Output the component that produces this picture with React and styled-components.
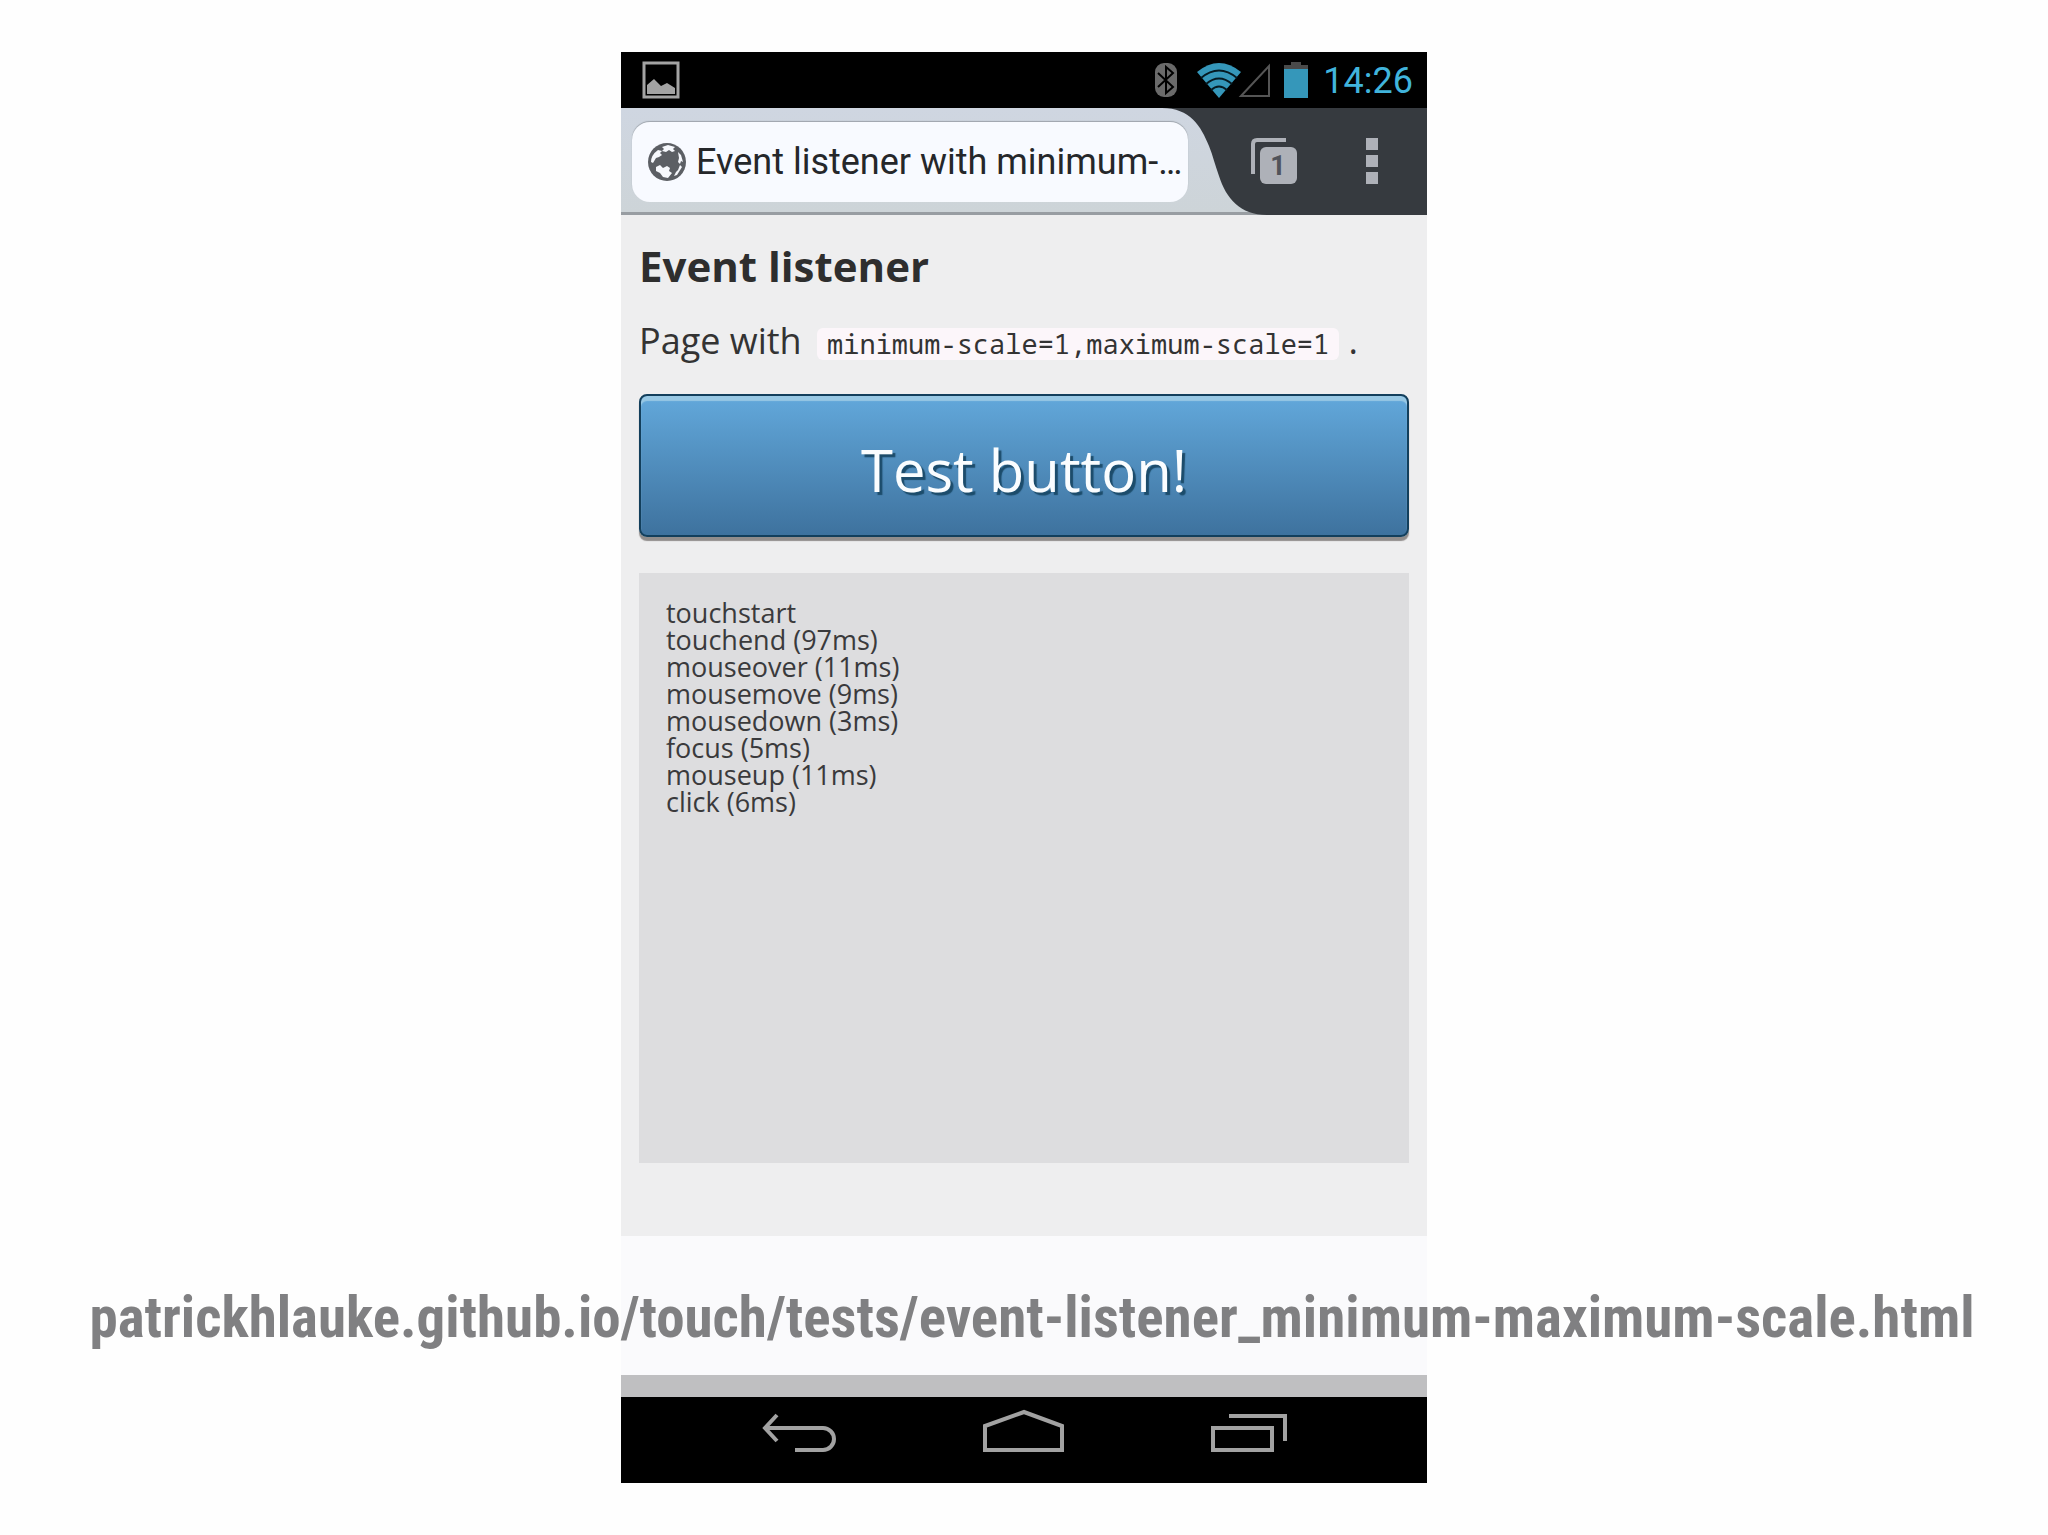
import styled, { createGlobalStyle } from "styled-components";

const events = [
  "touchstart",
  "touchend (97ms)",
  "mouseover (11ms)",
  "mousemove (9ms)",
  "mousedown (3ms)",
  "focus (5ms)",
  "mouseup (11ms)",
  "click (6ms)",
];

export default function App() {
  return (
    <>
      <GlobalStyle />
      <Slide>
        <Phone>
          <StatusBar />
          <BrowserBar />
          <TestPage />
          <BlankArea />
          <BottomStrip />
          <NavBar />
        </Phone>
        <Caption href="https://patrickhlauke.github.io/touch/tests/event-listener_minimum-maximum-scale.html">
          patrickhlauke.github.io/touch/tests/event-listener_minimum-maximum-scale.html
        </Caption>
      </Slide>
    </>
  );
}

function StatusBar() {
  return (
    <StatusContainer>
      <svg width="38" height="38" viewBox="0 0 38 38">
        <rect x="2" y="2" width="34" height="34" fill="none" stroke="#a3a3a3" strokeWidth="3" />
        <path d="M5 33V24L12 18L19 25L25 22L33 27V33Z" fill="#a3a3a3" />
      </svg>
      <StatusIcons>
        <svg width="24" height="36" viewBox="0 0 24 36">
          <rect x="1" y="1" width="22" height="34" rx="9" fill="#6a6a6a" />
          <path d="M4 11L19 25L12 31V5L19 11L4 25" fill="none" stroke="#000" strokeWidth="2" />
        </svg>
        <WifiIcon />
        <SignalIcon />
        <svg width="24" height="36" viewBox="0 0 24 36">
          <path d="M7 0H17V3H24V7H0V3H7Z" fill="#4a4a4a" />
          <rect y="7" width="24" height="29" fill="#3597ba" />
        </svg>
        <Clock>14:26</Clock>
      </StatusIcons>
    </StatusContainer>
  );
}

function WifiIcon() {
  return (
    <Wifi width="46" height="36" viewBox="0 0 46 36">
      <path d="M1 10Q23 -8 45 10L23 36Z" fill="#3597ba" />
      <g fill="none" stroke="#061a22" strokeWidth="2">
        <path d="M5 16Q23 1 41 16" />
        <path d="M10 22Q23 11 36 22" />
        <path d="M15 28Q23 21 31 28" />
      </g>
    </Wifi>
  );
}

function SignalIcon() {
  return (
    <Signal width="34" height="36" viewBox="0 0 34 36">
      <path d="M3 34L31 4V34Z" fill="none" stroke="#555" strokeWidth="2" />
    </Signal>
  );
}

function BrowserBar() {
  return (
    <BarContainer>
      <AddressBox>
        <svg width="38" height="38" viewBox="0 0 38 38">
          <circle cx="19" cy="19" r="19" fill="#5c5f64" />
          <g fill="#f6f8fc">
            <path d="M14 4L20 2L27 4L25 6L27 8L24 9L21 7L18 9L14 8L16 6Z" />
            <path d="M10 7L14 8L12 10L14 12L11 14L8 15L5 20L3 19Q3 12 10 7Z" />
            <path d="M8 24L12 22L15 25L19 23L22 25L21 28L24 30L20 35L15 34L12 30L8 28Z" />
            <path d="M30 9L33 12L35 19L33 18L32 21L30 19L31 15Z" />
            <path d="M32 22L34 24L29 32L26 33L28 29L30 27Z" />
          </g>
        </svg>
        <AddressInput aria-label="Page address" defaultValue="Event listener with minimum-…" />
      </AddressBox>
      <BarActions>
        <TabEdge width="105" height="107" viewBox="0 0 105 107">
          <path d="M0 0C28 0 39 18 47 38C51 48 53 57 57 68C64 90 78 107 105 107V0Z" fill="#363a3f" />
        </TabEdge>
        <ActionButton aria-label="Tabs">
          <svg width="48" height="48" viewBox="0 0 48 48">
            <path d="M3 37V7Q3 3 7 3H36" fill="none" stroke="#aeb1b8" strokeWidth="4" />
            <rect x="10" y="10" width="37" height="37" rx="6" fill="#aeb1b8" />
            <text x="28" y="38" textAnchor="middle">1</text>
          </svg>
        </ActionButton>
        <ActionButton aria-label="Menu">
          <svg width="12" height="46" viewBox="0 0 12 46">
            <path d="M0 0H12V12H0ZM0 17H12V29H0ZM0 34H12V46H0Z" fill="#aeb1b8" />
          </svg>
        </ActionButton>
      </BarActions>
    </BarContainer>
  );
}

function TestPage() {
  return (
    <PageContainer>
      <h1>Event listener</h1>
      <p>
        Page with <code>minimum-scale=1,maximum-scale=1</code> .
      </p>
      <TestButton type="button">Test button!</TestButton>
      <Log>
        {events.map((event) => (
          <li key={event}>{event}</li>
        ))}
      </Log>
    </PageContainer>
  );
}

function NavBar() {
  return (
    <NavContainer>
      <NavButton aria-label="Back">
        <svg width="84" height="46" viewBox="0 0 84 46">
          <path d="M20 7L8 20L20 33M8 20H66A11 11 0 0 1 66 42H38" />
        </svg>
      </NavButton>
      <NavButton aria-label="Home">
        <svg width="84" height="46" viewBox="0 0 84 46">
          <path d="M3 42V18L42 4L80 18V42Z" />
        </svg>
      </NavButton>
      <NavButton aria-label="Recent apps">
        <svg width="84" height="46" viewBox="0 0 84 46">
          <path d="M6 20H65V42H6ZM22 8H78V33" />
        </svg>
      </NavButton>
    </NavContainer>
  );
}

const GlobalStyle = createGlobalStyle`
  * {
    box-sizing: border-box;
  }
  body {
    margin: 0;
    background: #fefefe;
  }
  svg {
    display: block;
    flex-shrink: 0;
  }
`;

const Slide = styled.main`
  position: relative;
  display: flex;
  justify-content: center;
  align-items: flex-start;
  min-height: 100vh;
  padding: 52px 0;
  overflow: hidden;
`;

const Phone = styled.div`
  display: flex;
  flex-direction: column;
  width: 100%;
  max-width: 806px;
`;

const StatusContainer = styled.div`
  display: flex;
  align-items: center;
  justify-content: space-between;
  height: 56px;
  padding: 0 14px 0 21px;
  background: #000;
`;

const StatusIcons = styled.div`
  display: flex;
  align-items: center;
`;

const Wifi = styled.svg`
  margin-left: 18px;
`;

const Signal = styled.svg`
  margin-left: -4px;
  margin-right: 12px;
`;

const Clock = styled.span`
  margin-left: 15px;
  padding-top: 2px;
  font-family: Roboto, sans-serif;
  font-size: 36px;
  line-height: 40px;
  color: #41b4dc;
`;

const BarContainer = styled.div`
  display: flex;
  height: 107px;
  background: linear-gradient(#cfd6e1, #cdd4d8);
  border-bottom: 3px solid #989da2;
`;

const AddressBox = styled.div`
  display: flex;
  align-items: center;
  flex: 1;
  min-width: 0;
  gap: 8px;
  height: 80px;
  margin: 14px 78px 0 11px;
  padding: 0 4px 0 16px;
  border-radius: 18px;
  background: #f8faff;
  box-shadow: 0 -1px 1px #9ea4ac;
`;

const AddressInput = styled.input`
  flex: 1;
  min-width: 0;
  height: 60px;
  padding: 0 2px;
  border: 0;
  outline: 0;
  background: transparent;
  font-family: Roboto, sans-serif;
  font-size: 36px;
  color: #25272a;
`;

const BarActions = styled.div`
  position: relative;
  display: flex;
  align-items: center;
  width: 161px;
  height: 107px;
  padding-bottom: 2px;
  background: #363a3f;
`;

/* curved end of the active tab */
const TabEdge = styled.svg`
  position: absolute;
  top: 0;
  right: 160px;
`;

const ActionButton = styled.button`
  position: relative;
  display: flex;
  justify-content: center;
  width: 98px;
  margin-left: -41px;
  padding: 0;
  border: 0;
  background: transparent;

  & + & {
    margin-left: 0;
  }
  text {
    font-family: Roboto, sans-serif;
    font-size: 27px;
    font-weight: 700;
    fill: #50535a;
  }
`;

const PageContainer = styled.div`
  min-height: 1021px;
  padding: 24px 18px 0;
  background: #eeeeef;
  font-family: "Open Sans", sans-serif;
  color: #333;

  h1 {
    margin: 0;
    font-size: 42px;
    line-height: 54px;
    font-weight: 700;
    color: #2e2e2e;
  }
  p {
    margin: 21px 0 26px;
    font-size: 36px;
    line-height: 54px;
    white-space: nowrap;
  }
  code {
    display: inline-block;
    margin-left: 6px;
    padding: 0 10px;
    border-radius: 6px;
    background: #fcf6fa;
    font-family: "Noto Sans Mono", "Droid Sans Mono", "DejaVu Sans Mono", monospace;
    font-size: 27px;
    line-height: 32px;
  }
`;

const TestButton = styled.button`
  display: block;
  width: 100%;
  height: 143px;
  margin-bottom: 36px;
  padding: 8px 0 0;
  border: 2px solid #133f5c;
  border-radius: 8px;
  background: linear-gradient(#62a8db, #3e729e);
  box-shadow: inset 0 5px 1px #98c8e4, 0 4px 1px #918d8c;
  font-family: "Open Sans", sans-serif;
  font-size: 58px;
  line-height: 80px;
  color: #fafdff;
  text-shadow: 3px 3px 1px #1c4c6b;
`;

const Log = styled.ul`
  min-height: 590px;
  margin: 0;
  padding: 26px 27px;
  list-style: none;
  background: #dddddf;
  font-size: 27px;
  line-height: 27px;
  color: #3a3a3c;
`;

const BlankArea = styled.div`
  height: 139px;
  background: #fafafc;
`;

const BottomStrip = styled.div`
  height: 22px;
  background: #bfbfc1;
`;

const NavContainer = styled.nav`
  display: flex;
  height: 86px;
  padding: 0 66px 18px;
  background: #000;
`;

const NavButton = styled.button`
  display: flex;
  flex: 1;
  align-items: center;
  justify-content: center;
  padding: 0;
  border: 0;
  background: transparent;

  path {
    fill: none;
    stroke: #a2a2a2;
    stroke-width: 4;
  }
`;

/* link laid over the phone */
const Caption = styled.a`
  position: absolute;
  top: 1283px;
  left: 16px;
  right: 0;
  font-family: "Liberation Sans Narrow", "Roboto Condensed", "Open Sans Condensed", "Liberation Sans", sans-serif;
  font-size: 57px;
  line-height: 70px;
  font-weight: 700;
  text-align: center;
  text-decoration: none;
  white-space: nowrap;
  color: #808082;
`;
